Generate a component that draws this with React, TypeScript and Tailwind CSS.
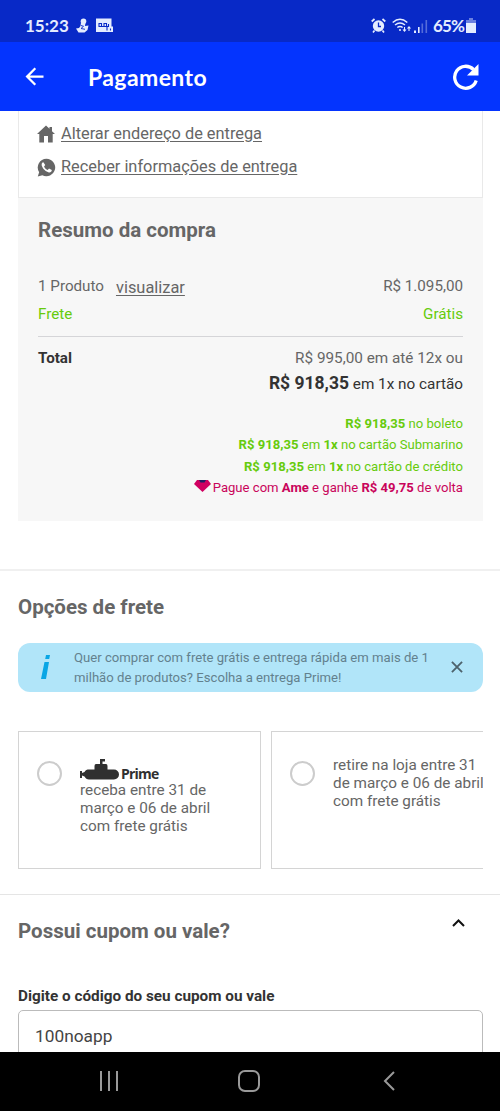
import { useState } from 'react';
import { MdArrowBack } from 'react-icons/md';

interface PaymentOption {
  price: string;
  installments?: string;
  description: string;
}

const paymentOptions: PaymentOption[] = [
  { price: 'R$ 918,35', description: 'no boleto' },
  { price: 'R$ 918,35', installments: '1x', description: 'no cartão Submarino' },
  { price: 'R$ 918,35', installments: '1x', description: 'no cartão de crédito' },
];

function StatusBar() {
  return (
    <div className="h-[42px] shrink-0 bg-[#0829c7] text-[#e4ecff] flex items-center justify-between pl-[25px] pr-[24px] pt-[9px]">
      <div className="flex items-center">
        <span className="w-[43px] text-[17px] leading-5 font-bold font-[Lato,sans-serif]">15:23</span>
        <svg className="ml-[8px] -mt-px" width="13" height="15" viewBox="0 0 13 15" fill="currentColor">
          <circle cx="7.500" cy="3.200" r="2.800" />
          <path d="M5 4.500h4.500L9 8l3.500-.5-1 4.500-3 2.500H2.500L0 10.500l3-.5 1.500-2z" />
          <path d="M5 7.500l2.500.8L5 10.500l4 .8" stroke="#0829c7" fill="none" strokeWidth=".9" />
        </svg>
        <svg className="ml-[7px]" width="17" height="15" viewBox="0 0 17 15" fill="currentColor">
          <path d="M0 .5h15.500v8H17V14H0z" />
          <g fill="none" stroke="#0829c7" strokeWidth="1.1">
            <path d="M3 5.500h2.500v3H3zM8 8.500v-3h2.500v3zM5.500 8.500H8M12.500 6v2.500h-1.500v4M14.500 10.500v2" />
          </g>
        </svg>
      </div>
      <div className="flex items-center">
        <svg width="15" height="15" viewBox="0 0 15 15" fill="none" stroke="currentColor">
          <circle cx="7.500" cy="8" r="5.700" fill="currentColor" stroke="none" />
          <path d="M.7 3.500L3.500 1M14.300 3.500L11.500 1M3.500 12.500l-1.500 2M11.500 12.500l1.500 2" strokeWidth="1.700" />
          <path d="M7.500 4.500v4H10" stroke="#0829c7" strokeWidth="1.300" />
        </svg>
        <svg className="ml-[6px]" width="20" height="15" viewBox="0 0 20 15" fill="none" stroke="currentColor" strokeWidth="1.500">
          <path d="M.7 4.500Q8-2 15.300 4.500M3 7q5-4 10 0M5.300 9.500q2.700-2 5.400 0" />
          <circle cx="8" cy="12" r="1" fill="currentColor" stroke="none" />
          <path d="M12.500 9v4m-1.500-1.500l1.500 1.700 1.500-1.700M17 13V9m-1.500 1.500L17 8.800l1.500 1.700" strokeWidth="1.100" />
        </svg>
        <svg className="ml-[2px]" width="14" height="14" viewBox="0 0 14 14" fill="currentColor">
          <path d="M0 11.500h2V14H0zM4 8h1.600v6H4z" />
          <path d="M7.500 4.500h1.600V14H7.500zM11.500 1h1.600v13h-1.600z" opacity=".35" />
        </svg>
        <span className="ml-[5px] w-[31px] text-[17px] leading-5 font-bold font-[Lato,sans-serif] tracking-[-0.9px] whitespace-nowrap">65%</span>
        <svg className="ml-[2px]" width="10" height="15" viewBox="0 0 10 15" fill="currentColor">
          <path d="M3 0h4v2h3v3H0V2h3z" opacity=".45" />
          <path d="M0 5h10v10H0z" />
        </svg>
      </div>
    </div>
  );
}

function AppHeader() {
  return (
    <header className="h-[69px] shrink-0 bg-[#0434fe] text-white flex items-center pl-[21px] pr-[20px]">
      <button className="cursor-pointer" aria-label="Voltar">
        <MdArrowBack size={27} />
      </button>
      <h1 className="ml-[40px] mt-px flex-1 text-[23px] leading-7 font-bold font-[Lato,sans-serif] tracking-[0.400px]">Pagamento</h1>
      <button className="cursor-pointer" aria-label="Atualizar">
        <svg width="28" height="28" viewBox="0 0 28 28" fill="none">
          <path d="M24.200 17.500A11 11 0 1 1 21.500 6.500" stroke="currentColor" strokeWidth="3.300" />
          <path d="M26.500 1v11.500H15z" fill="currentColor" />
        </svg>
      </button>
    </header>
  );
}

function DeliveryLinks() {
  return (
    <div className="ml-[18px] mr-[17px] h-[87px] border-x border-b border-[#e9e9e9] pl-[18px] pt-[12px] text-[#666]">
      <div className="flex items-center h-[22px]">
        <svg width="18" height="18" viewBox="0 0 18 18" fill="currentColor">
          <path d="M9 .5l3.500 3.300V2H15v4.200L18 9h-2.300v8.500H11V11H7v6.500H2.300V9H0z" />
        </svg>
        <a className="ml-[6px] text-[16.350px] leading-[22px] underline underline-offset-2">Alterar endereço de entrega</a>
      </div>
      <div className="flex items-center h-[22px] mt-[11px]">
        <svg width="19" height="19" viewBox="0 0 24 24" fill="currentColor">
          <path d="M12 1a11 11 0 1 1-5.200 20.700L1 23.500l1.700-5.600A11 11 0 0 1 12 1zM8 5.500C6 6 5.500 8 6.200 10.200c1.200 3.800 5.200 7.300 8.800 8 2.200.3 3.700-1.200 3.700-3.200l-3.500-1.800-1.700 1.900c-2-.8-3.700-2.500-4.600-4.500l1.500-1.800z" fillRule="evenodd" />
        </svg>
        <a className="ml-[5px] text-[16.350px] leading-[22px] underline underline-offset-2">Receber informações de entrega</a>
      </div>
    </div>
  );
}

function OrderSummary() {
  return (
    <section className="ml-[18px] mr-[17px] h-[323px] bg-[#f7f7f7] px-5 pt-[18px] text-[15.200px] text-[#666]">
      <h2 className="text-[20.500px] leading-7 font-bold">Resumo da compra</h2>
      <div className="mt-[31px] flex justify-between h-[22px] leading-[22px]">
        <div className="flex">
          <span>1 Produto</span>
          <a className="ml-[12px] mt-[2px] text-[16.400px] underline underline-offset-2">visualizar</a>
        </div>
        <span>R$ 1.095,00</span>
      </div>
      <div className="mt-[6px] flex justify-between leading-[22px] text-[#66cb0c]">
        <span>Frete</span>
        <span>Grátis</span>
      </div>
      <div className="mt-[11px] border-t border-[#d5d5d8] pt-[10px] flex justify-between">
        <span className="font-bold leading-[22px] text-[#333]">Total</span>
        <div className="text-right">
          <p className="text-[15.300px] leading-[22px]">R$ 995,00 em até 12x ou</p>
          <p className="mt-[3px] text-[15.300px] leading-[22px] text-[#333]">
            <strong className="text-[17.500px]">R$ 918,35</strong> em 1x no cartão
          </p>
        </div>
      </div>
      <ul className="mt-[18px] text-right text-[13.100px] leading-[21.300px] text-[#66cb0c]">
        {paymentOptions.map((option) => (
          <li key={option.description}>
            <strong>{option.price}</strong>{' '}
            {option.installments && (
              <>em <strong>{option.installments}</strong>{' '}</>
            )}
            {option.description}
          </li>
        ))}
        <li className="flex justify-end items-center text-[#c9045b]">
          <svg className="mr-[2px] -mt-[3px]" width="17" height="12" viewBox="0 0 17 12">
            <path d="M3 0h11l3 4-8.500 8L0 4z" fill="#d00061" />
            <path d="M5 0h7l-1.500 2.500h-4z" fill="#202064" />
          </svg>
          <span>Pague com <strong>Ame</strong> e ganhe <strong>R$ 49,75</strong> de volta</span>
        </li>
      </ul>
    </section>
  );
}

function PrimeLogo() {
  return (
    <div className="flex items-end h-[22px] text-[#303030]">
      <svg width="39" height="22" viewBox="0 0 39 22" fill="currentColor">
        <path d="M20 1h5v2.500h-2.500V6H26q1.500 0 1.500 2v3.500H34a5 5 0 0 1 0 10H9c-2 0-3.500-1-4.500-3L2 17.500V20H0v-7h2v2l2.500-1c1-2 2.500-2.500 4.500-2.500h5.500V8q0-2 1.500-2h4z" />
      </svg>
      <span className="ml-[2px] -mb-px text-[14px] leading-[14px] font-bold font-['Open_Sans',sans-serif] tracking-[-0.800px]">Prime</span>
    </div>
  );
}

function ShippingOptions() {
  const [selected, setSelected] = useState('');
  const [showTip, setShowTip] = useState(true);

  function radioClass(id: string) {
    return selected === id
      ? 'size-[25px] shrink-0 rounded-full border-[7px] border-[#0434fe] mt-[29px] cursor-pointer'
      : 'size-[25px] shrink-0 rounded-full border-2 border-[#ccc] mt-[29px] cursor-pointer';
  }

  return (
    <section className="mt-[48px] h-[325px] border-t-2 border-[#f0f0f0] pl-[18px] pr-[17px] pt-[22px] text-[#666]">
      <h2 className="text-[20.500px] leading-7 font-bold">Opções de frete</h2>
      {showTip && (
        <div className="mt-[22px] h-[49px] rounded-[12px] bg-[#b1e5f9] flex items-center">
          <svg className="ml-[23px] -mt-[2px]" width="9" height="26" viewBox="0 0 9 26" fill="#0aa6e5">
            <path d="M5 1h4l-.8 4H4.200zM3.500 8H8L5 25H0z" />
          </svg>
          <p className="ml-[24px] w-[360px] text-[13.130px] leading-[19.500px] text-[#63818e]">
            Quer comprar com frete grátis e entrega rápida em mais de 1<br />
            milhão de produtos? Escolha a entrega Prime!
          </p>
          <button className="ml-[17px] -mt-[2px] cursor-pointer" aria-label="Fechar" onClick={() => setShowTip(false)}>
            <svg width="12" height="12" viewBox="0 0 13 13" stroke="#4d626c" strokeWidth="2">
              <path d="M1 1l11 11M12 1L1 12" />
            </svg>
          </button>
        </div>
      )}
      <div className="mt-[39px] flex gap-[10px] overflow-hidden text-[15.300px] leading-[18px]">
        <div className="w-[243px] h-[138px] shrink-0 border border-[#d4d4d4] pl-[18px] flex items-start">
          <button className={radioClass('prime')} aria-label="Prime" onClick={() => setSelected('prime')} />
          <div className="ml-[18px] mt-[26px]">
            <PrimeLogo />
            <p className="mt-px">receba entre 31 de<br />março e 06 de abril<br />com frete grátis</p>
          </div>
        </div>
        <div className="w-[243px] h-[138px] shrink-0 border border-[#d4d4d4] pl-[18px] flex items-start">
          <button className={radioClass('store')} aria-label="Retirar na loja" onClick={() => setSelected('store')} />
          <p className="ml-[18px] mt-[24px] whitespace-nowrap">retire na loja entre 31<br />de março e 06 de abril<br />com frete grátis</p>
        </div>
      </div>
    </section>
  );
}

function CouponForm() {
  const [coupon, setCoupon] = useState('100noapp');

  return (
    <section className="border-t border-[#e5e5e5] pl-[18px] pr-[17px] pt-[22px]">
      <div className="flex justify-between text-[#666]">
        <h2 className="text-[20.500px] leading-7 font-bold">Possui cupom ou vale?</h2>
        <svg className="mr-[18px] mt-[2px]" width="13" height="8" viewBox="0 0 13 8" fill="none" stroke="#111" strokeWidth="2">
          <path d="M1 7l5.500-5.500L12 7" />
        </svg>
      </div>
      <label htmlFor="coupon" className="block mt-[40px] text-[15.300px] leading-[22px] font-bold text-[#333]">Digite o código do seu cupom ou vale</label>
      <input
        id="coupon"
        className="mt-[3px] w-full h-[52px] rounded-[5px] border border-[#bbb] px-4 text-[17.300px] text-[#444] outline-none"
        value={coupon}
        onChange={(e) => setCoupon(e.target.value)}
      />
    </section>
  );
}

function NavigationBar() {
  return (
    <nav className="h-[59px] shrink-0 bg-black flex items-center">
      <svg className="ml-[99px] -mt-[2px]" width="20" height="20" viewBox="0 0 20 20" stroke="#999" strokeWidth="2">
        <path d="M2 0v20M10 0v20M18 0v20" />
      </svg>
      <svg className="ml-[119px] -mt-[2px]" width="22" height="22" viewBox="0 0 22 22" fill="none" stroke="#999" strokeWidth="2">
        <rect x="1" y="1" width="20" height="20" rx="6" />
      </svg>
      <svg className="ml-[123px] -mt-[2px]" width="12" height="20" viewBox="0 0 12 20" fill="none" stroke="#999" strokeWidth="2">
        <path d="M11 1L2 10l9 9" />
      </svg>
    </nav>
  );
}

export default function App() {
  return (
    <div className="w-[500px] h-[1111px] overflow-hidden bg-white flex flex-col font-[Roboto,sans-serif]">
      <StatusBar />
      <AppHeader />
      <main className="flex-1 min-h-0 overflow-hidden">
        <DeliveryLinks />
        <OrderSummary />
        <ShippingOptions />
        <CouponForm />
      </main>
      <NavigationBar />
    </div>
  );
}
